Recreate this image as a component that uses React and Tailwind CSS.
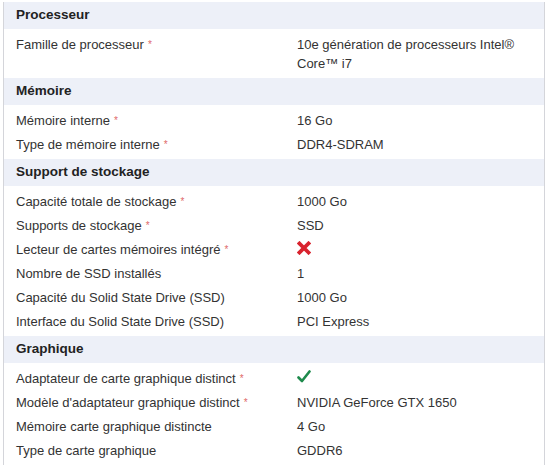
const sections = [
  {
    title: 'Processeur',
    rows: [
      { label: 'Famille de processeur', req: true, value: '10e génération de processeurs Intel® Core™ i7' },
    ],
  },
  {
    title: 'Mémoire',
    rows: [
      { label: 'Mémoire interne', req: true, value: '16 Go' },
      { label: 'Type de mémoire interne', req: true, value: 'DDR4-SDRAM' },
    ],
  },
  {
    title: 'Support de stockage',
    rows: [
      { label: 'Capacité totale de stockage', req: true, value: '1000 Go' },
      { label: 'Supports de stockage', req: true, value: 'SSD' },
      { label: 'Lecteur de cartes mémoires intégré', req: true, value: 'no' },
      { label: 'Nombre de SSD installés', value: '1' },
      { label: 'Capacité du Solid State Drive (SSD)', value: '1000 Go' },
      { label: 'Interface du Solid State Drive (SSD)', value: 'PCI Express' },
    ],
  },
  {
    title: 'Graphique',
    rows: [
      { label: 'Adaptateur de carte graphique distinct', req: true, value: 'yes' },
      { label: "Modèle d'adaptateur graphique distinct", req: true, value: 'NVIDIA GeForce GTX 1650' },
      { label: 'Mémoire carte graphique distincte', value: '4 Go' },
      { label: 'Type de carte graphique', value: 'GDDR6' },
    ],
  },
]

function Cross() {
  return (
    <svg width="14" height="14" viewBox="0 0 14 14" className="mt-[1px]">
      <path d="M2.5 2.5 L11.5 11.5 M11.5 2.5 L2.5 11.5" stroke="#d9232e" strokeWidth="3.8" strokeLinecap="square" />
    </svg>
  )
}

function Check() {
  return (
    <svg width="14" height="14" viewBox="0 0 14 14" className="mt-[1px]">
      <path d="M1.5 7.5 L5 11 L12.5 1.5" fill="none" stroke="#1e8a4c" strokeWidth="2.6" strokeLinecap="round" strokeLinejoin="round" />
    </svg>
  )
}

function Value({ v }) {
  if (v === 'no') return <Cross />
  if (v === 'yes') return <Check />
  return v
}

export default function App() {
  return (
    <div className="bg-white w-[546px] h-[468px] overflow-hidden pt-[2px] font-['Liberation_Sans',Arial,sans-serif] text-[13px] text-[#333]">
      <div className="ml-[3px] w-[542px] border-x border-[#d4d5da]">
        {sections.map((s) => (
          <div key={s.title}>
            <div className="h-[27px] bg-[#edf0f8] pl-[12px] flex items-center font-bold text-[13.5px] text-[#222]">
              {s.title}
            </div>
            <div className="py-[3px]">
              {s.rows.map((r) => (
                <div key={r.label} className="grid grid-cols-[293px_1fr] leading-[19px] py-[2.5px]">
                  <div className="pl-[12px]">
                    {r.label}
                    {r.req && <span className="text-[#e06a6a] text-[10px] align-top ml-[4px]">*</span>}
                  </div>
                  <div className="pr-[20px]">
                    <Value v={r.value} />
                  </div>
                </div>
              ))}
            </div>
          </div>
        ))}
      </div>
    </div>
  )
}
